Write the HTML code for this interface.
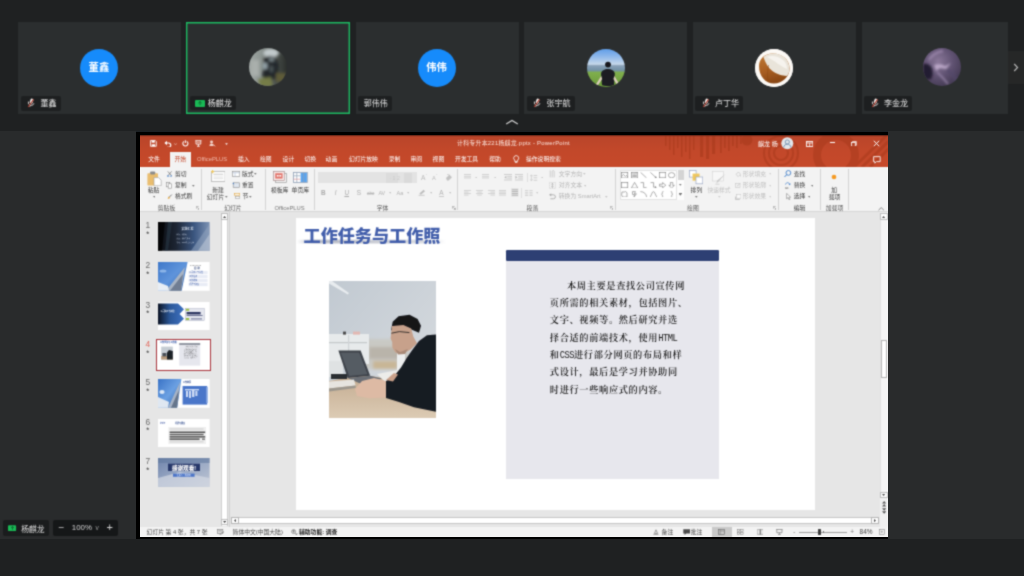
<!DOCTYPE html>
<html lang="zh-CN">
<head>
<meta charset="utf-8">
<title>会议 - 屏幕共享</title>
<style>
*{box-sizing:border-box;margin:0;padding:0}
html,body{width:1024px;height:576px;overflow:hidden;background:#1f2122}
body{position:relative;font-family:"Liberation Sans","Noto Sans CJK SC",sans-serif;color:#e6e6e6}
.abs{position:absolute}
/* ---------- participant strip ---------- */
.tile{position:absolute;top:22px;height:92px;width:163px;background:#2b2e2f}
.tile.active{outline:none;border:1.3px solid #1dbb63;box-shadow:inset 0 0 0 0.4px #1dbb63;background:#2b2e2f}
.av{position:absolute;left:50%;top:26.7px;width:38px;height:38px;margin-left:-19px;border-radius:50%;overflow:hidden}
.av.blue{background:#168bfb;color:#fff;font-weight:700;font-size:10.3px;line-height:38px;text-align:center;letter-spacing:0}
.nm{position:absolute;left:2.8px;top:73.9px;height:14.9px;background:#1d1f20;border-radius:2px;font-size:8px;line-height:14.9px;color:#e4e4e4;padding:0 4.2px 0 6.6px;white-space:nowrap;display:flex;align-items:center}
.nm svg{margin-right:5px;flex:none}
.nt{position:relative;top:1.2px}
/* ---------- share area ---------- */
#share{position:absolute;left:0;top:130.5px;width:1024px;height:408px;background:#292b2c}
#ppt{position:absolute;left:136px;top:132px;width:752px;height:407px;background:#000;overflow:hidden}
#win{position:absolute;left:4px;top:3px;width:748px;height:402px;background:#e6e6e6;overflow:hidden;font-size:5.8px;color:#3b3b3b}
#titlebar{position:absolute;left:0;top:0;width:748px;height:31.5px;background:linear-gradient(#b9452a,#c2482a 45%,#c6492a);color:#fff;border-top:1px solid #5c2215}
#ribbon{position:absolute;left:0;top:31.5px;width:748px;height:45.5px;background:#f3f3f3;border-bottom:1px solid #d6d6d6}
#thumbs{position:absolute;left:0;top:77px;width:81px;height:315px;background:#e6e6e6}
#status{position:absolute;left:0;top:391.5px;width:748px;height:10.5px;background:#f3f3f3;color:#444}
.ov{position:absolute;left:0;top:0;width:748px;height:402px}
#win{will-change:transform;filter:url(#soft)}
#strip{position:absolute;left:0;top:0;width:1024px;height:130px;will-change:transform;filter:url(#soft)}
#bl{position:absolute;left:0;top:0;width:130px;height:576px;will-change:transform;filter:url(#soft)}
.la{font-family:"Liberation Mono",monospace;font-weight:400;font-size:8.8px;letter-spacing:-0.5px;display:inline-block;transform:scaleY(1.2);transform-origin:50% 78%;line-height:1}
.t{position:absolute;white-space:nowrap;line-height:1}
</style>
</head>
<body>
<svg width="0" height="0" style="position:absolute"><defs><filter id="soft" x="0" y="0" width="100%" height="100%" color-interpolation-filters="sRGB"><feConvolveMatrix order="3" kernelMatrix="0.04 0.11 0.04 0.11 0.40 0.11 0.04 0.11 0.04" divisor="1" edgeMode="duplicate" preserveAlpha="false"/></filter></defs></svg>
<!-- PARTICIPANTS -->
<div id="strip">
<div class="tile" style="left:18px"><div class="av blue" style="margin-left:-19.6px">董鑫</div><div class="nm"><svg width="8" height="10" viewBox="0 0 8 10"><g transform="rotate(18 4 5)"><rect x="2.5" y="0.4" width="3" height="5.4" rx="1.5" fill="#f4efee"/><path d="M1.1 4.4a2.9 2.9 0 0 0 5.8 0M4 7.3v1.7" stroke="#e6dedc" stroke-width="0.85" fill="none"/></g><path d="M6.6 1.4L1.2 9" stroke="#a8392b" stroke-width="1.1"/></svg><span class="nt">董鑫</span></div></div>
<div class="tile active" style="left:186px;width:164.3px;height:92.3px"><div class="av" id="av2" style="top:25.3px;margin-left:-19.6px">
<svg width="38" height="38" viewBox="0 0 38 38"><defs><filter id="b2"><feGaussianBlur stdDeviation="1.4"/></filter><linearGradient id="g2" x1="0" y1="0" x2="1" y2="0"><stop offset="0" stop-color="#9fa6a3"/><stop offset="0.3" stop-color="#8d9592"/><stop offset="0.6" stop-color="#565c58"/><stop offset="1" stop-color="#2b2f2c"/></linearGradient></defs><rect width="38" height="38" fill="url(#g2)"/><g filter="url(#b2)"><ellipse cx="22" cy="5" rx="8" ry="4.5" fill="#c2cacc"/><path d="M15 10l5-2 6 1 4 7-1 14-10 3-6-5 2-9z" fill="#232829"/><rect x="14" y="15" width="4.4" height="6" fill="#93a2a8"/><rect x="20" y="10" width="5" height="3.4" fill="#7a878b"/><rect x="21" y="18" width="3" height="6" fill="#4c5558"/><path d="M9 31l13-2 2 10H11z" fill="#747b47"/><rect x="27" y="25" width="10" height="9" fill="#5e5c37"/><rect x="2" y="12" width="8" height="16" fill="#a9afac"/></g></svg></div>
<div class="nm" style="left:2.8px;top:72.6px;padding-left:4.8px"><svg style="margin-right:3.2px" width="10" height="7" viewBox="0 0 10 7"><rect x="0" y="0" width="10" height="7" rx="1" fill="#19b955"/><path d="M5 1.6v3.6M3.4 3L5 1.5 6.6 3" stroke="#0d5e2d" stroke-width="0.9" fill="none"/></svg><span class="nt">杨麒龙</span></div></div>
<div class="tile" style="left:355.5px"><div class="av blue" style="margin-left:-19.5px">伟伟</div><div class="nm" style="left:2.5px;padding-left:5.8px;padding-right:4.6px"><span class="nt">郭伟伟</span></div></div>
<div class="tile" style="left:524px"><div class="av" id="av4" style="margin-left:-19px">
<svg width="38" height="38" viewBox="0 0 38 38"><defs><linearGradient id="sky" x1="0" y1="0" x2="0" y2="1"><stop offset="0" stop-color="#609ee9"/><stop offset="0.2" stop-color="#8fb8ea"/><stop offset="0.4" stop-color="#c6d8ea"/><stop offset="0.44" stop-color="#8aa1b8"/><stop offset="0.56" stop-color="#7291a6"/><stop offset="0.62" stop-color="#7fae4c"/><stop offset="1" stop-color="#6b9a3a"/></linearGradient><filter id="b4"><feGaussianBlur stdDeviation="0.7"/></filter></defs><rect width="38" height="38" fill="url(#sky)"/><g filter="url(#b4)"><circle cx="21" cy="15.6" r="2.9" fill="#14171a"/><path d="M14 24.6c0.6-3 3.4-4.6 7-4.6s6.2 1.6 6.8 4.6l-0.8 11.4c-2 1.4-10 1.4-12 0z" fill="#1a1e21"/><path d="M14.2 27l-5.4 8.6 2 1 4.4-6.6zM27.4 27l5 8.2-2 1-4-6.2z" fill="#d9ccb9"/></g></svg></div>
<div class="nm"><svg width="8" height="10" viewBox="0 0 8 10"><g transform="rotate(18 4 5)"><rect x="2.5" y="0.4" width="3" height="5.4" rx="1.5" fill="#f4efee"/><path d="M1.1 4.4a2.9 2.9 0 0 0 5.8 0M4 7.3v1.7" stroke="#e6dedc" stroke-width="0.85" fill="none"/></g><path d="M6.6 1.4L1.2 9" stroke="#a8392b" stroke-width="1.1"/></svg><span class="nt">张宇航</span></div></div>
<div class="tile" style="left:692.7px"><div class="av" id="av5" style="background:#fff;margin-left:-19.4px;top:26.8px">
<svg width="38" height="38" viewBox="0 0 38 38"><defs><filter id="b5"><feGaussianBlur stdDeviation="0.6"/></filter><linearGradient id="co" x1="0" y1="0" x2="0.3" y2="1"><stop offset="0" stop-color="#c07a36"/><stop offset="0.6" stop-color="#a85e22"/><stop offset="1" stop-color="#8a4816"/></linearGradient></defs><circle cx="19" cy="19" r="19" fill="#fcf9f5"/><g filter="url(#b5)"><path d="M4 17c0-7 6-12.6 14-12.4 9 0.2 16.6 6 16.6 15 0 8-7 15-15.600000000000001 15C10.4 34.6 4 27 4 17z" fill="url(#co)"/><path d="M8.400000000000002 8c4-4 12-4.6 18-1.6 6 3 8.6 9 8 15-0.4 3-2 5-3 5.600000000000001-4-0.4-9-1.4-14-5-4-3-7-8-9-14z" fill="#e9e4da"/><path d="M12 8c5-2 11-1 16 3 3 2.600000000000001 4 6 4 9-5-2-9-5-12-7.4-3-2-6-3.6-8-4.6z" fill="#f6f3ee"/><path d="M13.6 16c-1 6-2 12 0 17" stroke="#8a4816" stroke-width="0.8" fill="none" opacity="0.6"/></g></svg></div>
<div class="nm"><svg width="8" height="10" viewBox="0 0 8 10"><g transform="rotate(18 4 5)"><rect x="2.5" y="0.4" width="3" height="5.4" rx="1.5" fill="#f4efee"/><path d="M1.1 4.4a2.9 2.9 0 0 0 5.8 0M4 7.3v1.7" stroke="#e6dedc" stroke-width="0.85" fill="none"/></g><path d="M6.6 1.4L1.2 9" stroke="#a8392b" stroke-width="1.1"/></svg><span class="nt">卢丁华</span></div></div>
<div class="tile" style="left:861.5px;width:146.5px"><div class="av" id="av6" style="left:80.5px;margin-left:-19px;top:26.3px">
<svg width="38" height="38" viewBox="0 0 38 38"><defs><radialGradient id="pg" cx="0.4" cy="0.35" r="0.75"><stop offset="0" stop-color="#8a7899"/><stop offset="0.5" stop-color="#615373"/><stop offset="1" stop-color="#3f364e"/></radialGradient><filter id="b6"><feGaussianBlur stdDeviation="1.2"/></filter></defs><rect width="38" height="38" fill="url(#pg)"/><g filter="url(#b6)"><path d="M0 16c4-1 8 1 9 5s1 7-1 10l-8 1z" fill="#231e30"/><path d="M11 17c4-2 8-1 11 1l6-3-5 6-6-1-4 3z" fill="#b9a6c6"/><path d="M14 24l6 6 5 6" stroke="#9f8cb1" stroke-width="1.4" fill="none"/><path d="M6 12c3-5 8-8 14-9" stroke="#a792b6" stroke-width="2.4" fill="none" opacity="0.7"/><path d="M24 22c4 2 8 6 10 12" stroke="#54476a" stroke-width="4" fill="none" opacity="0.6"/></g></svg></div>
<div class="nm"><svg width="8" height="10" viewBox="0 0 8 10"><g transform="rotate(18 4 5)"><rect x="2.5" y="0.4" width="3" height="5.4" rx="1.5" fill="#f4efee"/><path d="M1.1 4.4a2.9 2.9 0 0 0 5.8 0M4 7.3v1.7" stroke="#e6dedc" stroke-width="0.85" fill="none"/></g><path d="M6.6 1.4L1.2 9" stroke="#a8392b" stroke-width="1.1"/></svg><span class="nt">李金龙</span></div></div>
<div class="abs" style="left:1008px;top:51px;width:16px;height:33px;background:#262727"><svg class="abs" style="left:5px;top:12px" width="6" height="9" viewBox="0 0 6 9"><path d="M1.2 1l3.4 3.5L1.2 8" stroke="#b9b9b9" stroke-width="1.1" fill="none"/></svg></div>
<svg class="abs" style="left:504.5px;top:118.5px" width="14" height="6" viewBox="0 0 14 6"><path d="M1.2 5L7 1.4 12.8 5" stroke="#d0d0d0" stroke-width="1.2" fill="none"/></svg>
</div>
<!-- SHARE -->
<div id="share"></div>
<div class="abs" style="left:136px;top:130.5px;width:752px;height:2px;background:#1c2125"></div>
<div id="ppt"><div id="win">
<div id="titlebar"></div>
<div class="ov" id="titlebar-c">
<svg class="abs" style="left:500px;top:0.5px;" width="248" height="31" viewBox="0 0 248 31"><g fill="#a93a1c" opacity="0.6"><rect x="25" y="0" width="1.5" height="10"/><rect x="29" y="0" width="1.5" height="14"/><rect x="33" y="0" width="1.5" height="19"/><rect x="37" y="0" width="1.5" height="12"/><rect x="41" y="0" width="1.5" height="21"/><rect x="45" y="0" width="1.5" height="16"/><rect x="49" y="0" width="1.5" height="23"/><rect x="53" y="0" width="1.5" height="14"/><rect x="60" y="0" width="3.2" height="21"/><rect x="66" y="0" width="3.2" height="23"/><rect x="72" y="0" width="3.2" height="18"/><rect x="80" y="0" width="1.7" height="17"/><rect x="84" y="0" width="1.7" height="12"/><rect x="88" y="0" width="1.7" height="15"/><rect x="92" y="0" width="1.7" height="10"/><rect x="96" y="0" width="1.7" height="12"/><rect x="100" y="0" width="1.7" height="8"/><circle cx="107" cy="4" r="5.5"/></g><g fill="none" stroke="#a93a1c" opacity="0.55"><circle cx="141" cy="17" r="7" stroke-width="2.2"/><circle cx="141" cy="17" r="12" stroke-width="2.2"/><circle cx="141" cy="17" r="17" stroke-width="2.2"/><circle cx="196" cy="19" r="19" stroke-width="8"/><path d="M214 31L246 0M222 31L254 0M230 31L262 0" stroke-width="3"/></g></svg>
<svg class="abs" style="left:10px;top:5.3px;" width="6.8" height="6.8" viewBox="0 0 8 8"><path d="M0.6 0.6h5.6l1.2 1.2v5.6H0.6z" fill="none" stroke="#fff" stroke-width="1"/><rect x="2" y="0.8" width="3.6" height="2.4" fill="#fff"/><rect x="2" y="5" width="4" height="2.4" fill="#fff"/></svg>
<svg class="abs" style="left:24px;top:5.2px;" width="8" height="7.1" viewBox="0 0 9 8"><path d="M1 3.4h4.2a2.4 2.4 0 0 1 0 4.8H3.6" fill="none" stroke="#fff" stroke-width="1.3"/><path d="M3.4 0.8L0.6 3.4l2.8 2.6z" fill="#fff"/></svg>
<svg class="abs" style="left:33.8px;top:7.6px;" width="3" height="2.4" viewBox="0 0 3 2.4"><path d="M0.2 0.3L1.5 1.9 2.8 0.3" fill="none" stroke="#f0c9bd" stroke-width="0.6"/></svg>
<svg class="abs" style="left:42.4px;top:5.3px;" width="6.8" height="6.8" viewBox="0 0 8 8"><path d="M5.6 1.6a3 3 0 1 1-3.2 0" fill="none" stroke="#fff" stroke-width="1.3"/><path d="M4 0.2v3.4" stroke="#fff" stroke-width="1.2"/></svg>
<svg class="abs" style="left:55.2px;top:5.4px;" width="6.8" height="6.8" viewBox="0 0 8 8"><path d="M0.4 0.8h7.2M1.2 0.8v4h5.6v-4M4 4.8v2.6M2.4 7.4h3.2" fill="none" stroke="#fff" stroke-width="1"/><path d="M2.4 2.6h3.2" stroke="#fff" stroke-width="0.8"/></svg>
<svg class="abs" style="left:69.2px;top:5.4px;" width="6.8" height="6.8" viewBox="0 0 8 8"><circle cx="3" cy="2.4" r="1.7" fill="#f3d5cc"/><path d="M0.6 7c0-2 1.2-2.8 2.4-2.8S5.4 5 5.4 7z" fill="#f3d5cc"/><path d="M5 5.4l2.4 2" stroke="#f3d5cc" stroke-width="0.9"/></svg>
<svg class="abs" style="left:85.4px;top:8.2px;" width="3" height="2.4" viewBox="0 0 3 2.4"><path d="M0.2 0.2h2.6L1.5 2z" fill="#fff"/></svg>
<span class="t" style="top:6.28px;font-size:5.9px;left:317px;color:#fbe3da;letter-spacing:0.27px;">计科专升本221杨麒龙.pptx  -  PowerPoint</span>
<span class="t" style="top:6.04px;font-size:6px;left:618px;color:#fff;">麒龙 杨</span>
<svg class="abs" style="left:641px;top:2.3px;" width="12.6" height="12.6" viewBox="0 0 12.6 12.6"><circle cx="6.3" cy="6.3" r="6" fill="#e2e6ea"/><circle cx="6.3" cy="5" r="2.1" fill="none" stroke="#7391b0" stroke-width="0.9"/><path d="M2.6 10.6c0.4-2.4 1.8-3.4 3.7-3.4s3.3 1 3.7 3.4" fill="none" stroke="#7391b0" stroke-width="0.9"/></svg>
<svg class="abs" style="left:666px;top:5.6px;" width="7.4" height="6" viewBox="0 0 7.4 6"><rect x="0.5" y="0.5" width="6.4" height="5" fill="none" stroke="#fff" stroke-width="0.9"/><path d="M0.5 2h6.4M3.7 2v3.5" stroke="#fff" stroke-width="0.8"/></svg>
<div class="abs" style="left:690px;top:7.2px;width:5.4px;height:0.9px;background:#fff;"></div>
<svg class="abs" style="left:711.2px;top:5.6px;" width="5.8" height="5.8" viewBox="0 0 7 7"><rect x="0.6" y="1.8" width="4.6" height="4.6" fill="none" stroke="#fff" stroke-width="1"/><path d="M1.8 1.8V0.6h4.6v4.6H5.2" fill="none" stroke="#fff" stroke-width="0.9"/></svg>
<svg class="abs" style="left:733.4px;top:5.2px;" width="7" height="7" viewBox="0 0 7 7"><path d="M0.8 0.8l5.4 5.4M6.2 0.8L0.8 6.2" stroke="#fff" stroke-width="0.95"/></svg>
<svg class="abs" style="left:732.6px;top:20.6px;" width="8" height="8" viewBox="0 0 8 8"><path d="M0.6 0.6h6.6v5H3.4L1.8 7.2V5.6H0.6z" fill="none" stroke="#fff" stroke-width="0.85"/></svg>
<div class="abs" style="left:29.6px;top:16.8px;width:21.4px;height:14.8px;background:#f3f3f3;"></div>
<span class="t" style="top:22.22px;font-size:5.8px;left:14px;transform:translateX(-50%);color:#fff;">文件</span>
<span class="t" style="top:22.22px;font-size:5.8px;left:40.3px;transform:translateX(-50%);color:#c4472a;">开始</span>
<span class="t" style="top:22.22px;font-size:5.8px;left:72px;transform:translateX(-50%);color:#efb8a9;">OfficePLUS</span>
<span class="t" style="top:22.22px;font-size:5.8px;left:103.7px;transform:translateX(-50%);color:#fff;">插入</span>
<span class="t" style="top:22.22px;font-size:5.8px;left:125.8px;transform:translateX(-50%);color:#fff;">绘图</span>
<span class="t" style="top:22.22px;font-size:5.8px;left:148.4px;transform:translateX(-50%);color:#fff;">设计</span>
<span class="t" style="top:22.22px;font-size:5.8px;left:170.3px;transform:translateX(-50%);color:#fff;">切换</span>
<span class="t" style="top:22.22px;font-size:5.8px;left:191.4px;transform:translateX(-50%);color:#fff;">动画</span>
<span class="t" style="top:22.22px;font-size:5.8px;left:223.4px;transform:translateX(-50%);color:#fff;">幻灯片放映</span>
<span class="t" style="top:22.22px;font-size:5.8px;left:254.5px;transform:translateX(-50%);color:#fff;">录制</span>
<span class="t" style="top:22.22px;font-size:5.8px;left:276.3px;transform:translateX(-50%);color:#fff;">审阅</span>
<span class="t" style="top:22.22px;font-size:5.8px;left:298.4px;transform:translateX(-50%);color:#fff;">视图</span>
<span class="t" style="top:22.22px;font-size:5.8px;left:326.5px;transform:translateX(-50%);color:#fff;">开发工具</span>
<span class="t" style="top:22.22px;font-size:5.8px;left:355px;transform:translateX(-50%);color:#fff;">帮助</span>
<svg class="abs" style="left:373.4px;top:20.4px;" width="6.4" height="8.4" viewBox="0 0 6.4 8.4"><path d="M3.2 0.6a2.5 2.5 0 0 1 1.5 4.5v1.3H1.7V5.1A2.5 2.5 0 0 1 3.2 0.6zM2 7.4h2.4" fill="none" stroke="#fff" stroke-width="0.8"/></svg>
<span class="t" style="top:22.22px;font-size:5.8px;left:386px;color:#fff;">操作说明搜索</span>
</div>
<div id="ribbon"></div>
<div class="ov" id="ribbon-c">
<svg class="abs" style="left:7.4px;top:35.6px;" width="14.6" height="15.2" viewBox="0 0 14.6 15.2"><rect x="0.4" y="2.2" width="10.6" height="12.4" rx="0.8" fill="#e9bd6f"/><rect x="3.2" y="0.4" width="5" height="3.2" rx="0.8" fill="#8b8b8b"/><path d="M7 6.6h4.6l2.6 2.6v5.6H7z" fill="#fff" stroke="#9a9a9a" stroke-width="0.6"/></svg>
<span class="t" style="top:52.52px;font-size:5.8px;left:13.6px;transform:translateX(-50%);color:#3c3c3c;">粘贴</span>
<svg class="abs" style="left:12.5px;top:61px;" width="2.6" height="1.8" viewBox="0 0 2.6 1.8"><path d="M0 0h2.6L1.3 1.7z" fill="#777"/></svg>
<svg class="abs" style="left:26.6px;top:35.8px;" width="5.4" height="6.2" viewBox="0 0 5.4 6.2"><path d="M0.8 0.4l3.4 4M4.6 0.4L1.2 4.4" stroke="#6b6b6b" stroke-width="0.7"/><circle cx="1" cy="5.2" r="0.8" fill="none" stroke="#3d78c2" stroke-width="0.6"/><circle cx="4.4" cy="5.2" r="0.8" fill="none" stroke="#3d78c2" stroke-width="0.6"/></svg>
<span class="t" style="top:36.52px;font-size:5.8px;left:35px;color:#3c3c3c;">剪切</span>
<svg class="abs" style="left:26.4px;top:47.2px;" width="6" height="6.6" viewBox="0 0 6 6.6"><rect x="0.4" y="0.4" width="3.4" height="4.4" fill="#fff" stroke="#8a8a8a" stroke-width="0.6"/><rect x="2.2" y="1.8" width="3.4" height="4.4" fill="#fff" stroke="#8a8a8a" stroke-width="0.6"/></svg>
<span class="t" style="top:48.12px;font-size:5.8px;left:35px;color:#3c3c3c;">复制</span>
<svg class="abs" style="left:52px;top:49.9px;" width="2.6" height="1.8" viewBox="0 0 2.6 1.8"><path d="M0 0h2.6L1.3 1.7z" fill="#777"/></svg>
<svg class="abs" style="left:27px;top:58.6px;" width="5.6" height="5.6" viewBox="0 0 5.6 5.6"><path d="M4.8 0.6L2.4 3" stroke="#6b6b6b" stroke-width="0.9"/><path d="M0.6 5l1-2.6 1.8 1.6z" fill="#e0a43c"/></svg>
<span class="t" style="top:59.12px;font-size:5.8px;left:35px;color:#3c3c3c;">格式刷</span>
<span class="t" style="top:70.52px;font-size:5.8px;left:26.5px;transform:translateX(-50%);color:#555;">剪贴板</span>
<svg class="abs" style="left:55.6px;top:71.3px;" width="3.8" height="3.8" viewBox="0 0 3.8 3.8"><path d="M0.3 0.3h2.4M0.3 0.3v2.4M1.4 1.4l2 2M3.4 1.8v1.6H1.8" fill="none" stroke="#8a8a8a" stroke-width="0.6"/></svg>
<div class="abs" style="left:61.25px;top:33.5px;width:0.7px;height:41.8px;background:#d2d2d2;"></div>
<svg class="abs" style="left:70.8px;top:35.2px;" width="14.6" height="12" viewBox="0 0 14.6 12"><rect x="0.5" y="1.6" width="13.6" height="9.8" fill="#fff" stroke="#a9a9a9" stroke-width="0.7"/><rect x="2.4" y="3.6" width="9.8" height="1.6" fill="#d9d9d9"/><rect x="2.4" y="6.6" width="9.8" height="0.8" fill="#d9d9d9"/><rect x="2.4" y="8.4" width="9.8" height="0.8" fill="#d9d9d9"/><path d="M1.6 0v3.2M0 1.6h3.2" stroke="#efc75e" stroke-width="1.1"/></svg>
<span class="t" style="top:52.82px;font-size:5.8px;left:78px;transform:translateX(-50%);color:#3c3c3c;">新建</span>
<span class="t" style="top:59.52px;font-size:5.8px;left:66.8px;color:#3c3c3c;">幻灯片</span>
<svg class="abs" style="left:85.3px;top:61.3px;" width="2.6" height="1.8" viewBox="0 0 2.6 1.8"><path d="M0 0h2.6L1.3 1.7z" fill="#777"/></svg>
<svg class="abs" style="left:92px;top:35.8px;" width="8.2" height="6" viewBox="0 0 8.2 6"><rect x="0.4" y="0.4" width="7.4" height="5.2" fill="#fff" stroke="#8a8a8a" stroke-width="0.6"/><path d="M0.4 1.8h7.4M3 1.8v3.8" stroke="#a7b9d3" stroke-width="0.6"/></svg>
<span class="t" style="top:36.52px;font-size:5.8px;left:102px;color:#3c3c3c;">版式</span>
<svg class="abs" style="left:114.1px;top:38.3px;" width="2.6" height="1.8" viewBox="0 0 2.6 1.8"><path d="M0 0h2.6L1.3 1.7z" fill="#777"/></svg>
<svg class="abs" style="left:92px;top:47.4px;" width="8.2" height="6" viewBox="0 0 8.2 6"><rect x="1.2" y="0.8" width="6.4" height="4.6" fill="#dfe6ef" stroke="#8a8a8a" stroke-width="0.6"/><path d="M0.4 1.4l1.6-1v2z" fill="#4a7ebf"/></svg>
<span class="t" style="top:48.12px;font-size:5.8px;left:102px;color:#3c3c3c;">重置</span>
<svg class="abs" style="left:93.6px;top:58.4px;" width="6.4" height="6.2" viewBox="0 0 6.4 6.2"><rect x="0.4" y="0.4" width="5.4" height="1.8" fill="#fff" stroke="#e0a43c" stroke-width="0.6"/><rect x="1.6" y="3.6" width="4.2" height="1.8" fill="#fff" stroke="#a0a0a0" stroke-width="0.6"/></svg>
<span class="t" style="top:59.12px;font-size:5.8px;left:102.4px;color:#3c3c3c;">节</span>
<svg class="abs" style="left:109.3px;top:60.9px;" width="2.6" height="1.8" viewBox="0 0 2.6 1.8"><path d="M0 0h2.6L1.3 1.7z" fill="#777"/></svg>
<span class="t" style="top:70.52px;font-size:5.8px;left:92.9px;transform:translateX(-50%);color:#555;">幻灯片</span>
<div class="abs" style="left:125.45px;top:33.5px;width:0.7px;height:41.8px;background:#d2d2d2;"></div>
<svg class="abs" style="left:133.2px;top:36.2px;" width="14" height="12.2" viewBox="0 0 14 12.2"><rect x="2.6" y="2.6" width="10.8" height="9" fill="#f7f7f7" stroke="#9c9c9c" stroke-width="0.7"/><rect x="0.5" y="0.5" width="10.8" height="9" fill="#fbeceb" stroke="#a78b8b" stroke-width="0.7"/><rect x="2.2" y="2.2" width="7.4" height="5.4" fill="#e0746b"/><rect x="3.8" y="4" width="1.8" height="1.6" fill="#fff"/><rect x="6.4" y="4" width="1.8" height="1.6" fill="#fff"/></svg>
<svg class="abs" style="left:152.8px;top:36.8px;" width="14.8" height="11" viewBox="0 0 14.8 11"><rect x="0.5" y="0.5" width="13.8" height="10" fill="#fff" stroke="#8e9fb5" stroke-width="0.8"/><rect x="7.6" y="0.9" width="6.3" height="9.2" fill="#5aa3ec"/><path d="M0.5 3.8h7M3.8 0.5v10M10.6 0.9v9.2" stroke="#8e9fb5" stroke-width="0.7"/><path d="M0.5 7.2h7" stroke="#d88" stroke-width="0.6"/></svg>
<span class="t" style="top:52.52px;font-size:5.8px;left:139.6px;transform:translateX(-50%);color:#3c3c3c;">模板库</span>
<span class="t" style="top:52.52px;font-size:5.8px;left:160.3px;transform:translateX(-50%);color:#3c3c3c;">单页库</span>
<span class="t" style="top:70.52px;font-size:5.8px;left:149.5px;transform:translateX(-50%);color:#777;">OfficePLUS</span>
<div class="abs" style="left:173.95px;top:33.5px;width:0.7px;height:41.8px;background:#d2d2d2;"></div>
<div class="abs" style="left:178px;top:37.4px;width:99px;height:10.8px;background:#e3e3e3;"></div>
<div class="abs" style="left:245.6px;top:38px;width:12.8px;height:9.6px;background:#dcdcdc;"></div>
<div class="abs" style="left:264px;top:38px;width:7.6px;height:9.6px;background:#dadada;"></div>
<span class="t" style="top:40.67px;font-size:5.2px;left:249.4px;color:#c9c9c9;">· 1 2</span>
<span class="t" style="top:55.28px;font-size:6.4px;left:183.3px;transform:translateX(-50%);color:#ababab;font-weight:700;">B</span>
<span class="t" style="top:55.28px;font-size:6.4px;left:195.6px;transform:translateX(-50%);color:#ababab;font-style:italic;">I</span>
<span class="t" style="top:55.28px;font-size:6.4px;left:206.7px;transform:translateX(-50%);color:#ababab;text-decoration:underline;">U</span>
<span class="t" style="top:55.28px;font-size:6.4px;left:218.9px;transform:translateX(-50%);color:#ababab;">S</span>
<span class="t" style="top:56.51px;font-size:4.6px;left:230.6px;transform:translateX(-50%);color:#b8b8b8;text-decoration:line-through;">abc</span>
<span class="t" style="top:55.69px;font-size:5.4px;left:241.8px;transform:translateX(-50%);color:#b4b4b4;">AV</span>
<svg class="abs" style="left:248.7px;top:57.4px;" width="2.6" height="1.8" viewBox="0 0 2.6 1.8"><path d="M0 0h2.6L1.3 1.7z" fill="#c4c4c4"/></svg>
<span class="t" style="top:55.6px;font-size:5.6px;left:260px;transform:translateX(-50%);color:#b4b4b4;">Aa</span>
<svg class="abs" style="left:266.9px;top:57.4px;" width="2.6" height="1.8" viewBox="0 0 2.6 1.8"><path d="M0 0h2.6L1.3 1.7z" fill="#c4c4c4"/></svg>
<svg class="abs" style="left:277.6px;top:54.2px;" width="8" height="7" viewBox="0 0 8 7"><path d="M1.4 4.6L5.6 0.8l1.4 1.4-4.2 3.6z" fill="#bcbcbc"/><rect x="0.6" y="5.8" width="6" height="1" fill="#c9c9c9"/></svg>
<svg class="abs" style="left:289.7px;top:57.4px;" width="2.6" height="1.8" viewBox="0 0 2.6 1.8"><path d="M0 0h2.6L1.3 1.7z" fill="#c4c4c4"/></svg>
<span class="t" style="top:54.98px;font-size:6.4px;left:301.4px;transform:translateX(-50%);color:#b0b0b0;">A</span>
<div class="abs" style="left:298.6px;top:60.6px;width:5.6px;height:0.9px;background:#c9c9c9;"></div>
<svg class="abs" style="left:308.7px;top:57.4px;" width="2.6" height="1.8" viewBox="0 0 2.6 1.8"><path d="M0 0h2.6L1.3 1.7z" fill="#c4c4c4"/></svg>
<span class="t" style="top:39.89px;font-size:6.6px;left:283.3px;transform:translateX(-50%);color:#b9b9b9;">A</span>
<span class="t" style="top:38.96px;font-size:4px;left:286.4px;transform:translateX(-50%);color:#b9b9b9;">ˆ</span>
<span class="t" style="top:40.6px;font-size:5.6px;left:293.8px;transform:translateX(-50%);color:#b9b9b9;">A</span>
<span class="t" style="top:39.36px;font-size:4px;left:296.6px;transform:translateX(-50%);color:#b9b9b9;">ˇ</span>
<svg class="abs" style="left:305.2px;top:39px;" width="8" height="7" viewBox="0 0 8 7"><path d="M1 4l3.4-3.2 2.6 2.4L3.6 6.4H2z" fill="#c2c2c2"/><path d="M4.6 1L2 0.2" stroke="#c2c2c2" stroke-width="0.7"/></svg>
<span class="t" style="top:70.52px;font-size:5.8px;left:242.6px;transform:translateX(-50%);color:#555;">字体</span>
<svg class="abs" style="left:312px;top:71.3px;" width="3.8" height="3.8" viewBox="0 0 3.8 3.8"><path d="M0.3 0.3h2.4M0.3 0.3v2.4M1.4 1.4l2 2M3.4 1.8v1.6H1.8" fill="none" stroke="#8a8a8a" stroke-width="0.6"/></svg>
<div class="abs" style="left:317.35px;top:33.5px;width:0.7px;height:41.8px;background:#d2d2d2;"></div>
<svg class="abs" style="left:323.6px;top:39.2px;" width="8" height="8" viewBox="0 0 8 8"><rect x="0" y="0.2" width="7" height="0.75" fill="#c6c6c6"/><rect x="0" y="1.9" width="7" height="0.75" fill="#c6c6c6"/><rect x="0" y="3.6" width="7" height="0.75" fill="#c6c6c6"/></svg>
<svg class="abs" style="left:334.5px;top:41.7px;" width="2.6" height="1.8" viewBox="0 0 2.6 1.8"><path d="M0 0h2.6L1.3 1.7z" fill="#cacaca"/></svg>
<svg class="abs" style="left:342.4px;top:39.2px;" width="8" height="8" viewBox="0 0 8 8"><rect x="0" y="0.2" width="7" height="0.75" fill="#c6c6c6"/><rect x="0" y="1.9" width="7" height="0.75" fill="#c6c6c6"/><rect x="0" y="3.6" width="7" height="0.75" fill="#c6c6c6"/></svg>
<svg class="abs" style="left:353.7px;top:41.7px;" width="2.6" height="1.8" viewBox="0 0 2.6 1.8"><path d="M0 0h2.6L1.3 1.7z" fill="#cacaca"/></svg>
<svg class="abs" style="left:363.6px;top:39px;" width="8.4" height="6.6" viewBox="0 0 8.4 6.6"><rect x="0" y="0" width="8" height="0.8" fill="#c4c4c4"/><rect x="3.2" y="1.9" width="4.8" height="0.8" fill="#c4c4c4"/><rect x="3.2" y="3.7" width="4.8" height="0.8" fill="#c4c4c4"/><rect x="0" y="5.6" width="8" height="0.8" fill="#c4c4c4"/><path d="M2.4 1.8v3L0.4 3.3z" fill="#b6b6b6"/></svg>
<svg class="abs" style="left:375.4px;top:39px;" width="8.4" height="6.6" viewBox="0 0 8.4 6.6"><rect x="0" y="0" width="8" height="0.8" fill="#c4c4c4"/><rect x="3.2" y="1.9" width="4.8" height="0.8" fill="#c4c4c4"/><rect x="3.2" y="3.7" width="4.8" height="0.8" fill="#c4c4c4"/><rect x="0" y="5.6" width="8" height="0.8" fill="#c4c4c4"/><path d="M0.4 1.8v3l2-1.5z" fill="#b6b6b6"/></svg>
<div class="abs" style="left:386.6px;top:37.6px;width:0.6px;height:9.8px;background:#dedede;"></div>
<svg class="abs" style="left:390.4px;top:38.6px;" width="7.4" height="7.6" viewBox="0 0 7.4 7.6"><path d="M1.4 1.2v5.2M0.2 2.2l1.2-1.4 1.2 1.4M0.2 5.4l1.2 1.4 1.2-1.4" fill="none" stroke="#bdbdbd" stroke-width="0.6"/><rect x="3.6" y="1" width="3.6" height="0.8" fill="#c6c6c6"/><rect x="3.6" y="3.4" width="3.6" height="0.8" fill="#c6c6c6"/><rect x="3.6" y="5.8" width="3.6" height="0.8" fill="#c6c6c6"/></svg>
<svg class="abs" style="left:400.7px;top:41.7px;" width="2.6" height="1.8" viewBox="0 0 2.6 1.8"><path d="M0 0h2.6L1.3 1.7z" fill="#cacaca"/></svg>
<svg class="abs" style="left:324.2px;top:55px;" width="8" height="7" viewBox="0 0 8 7"><rect x="0" y="0.2" width="7" height="0.7" fill="#c4c4c4"/><rect x="0" y="1.7" width="4.6" height="0.7" fill="#c4c4c4"/><rect x="0" y="3.2" width="7" height="0.7" fill="#c4c4c4"/><rect x="0" y="4.7" width="4.6" height="0.7" fill="#c4c4c4"/></svg>
<svg class="abs" style="left:335.9px;top:55px;" width="8" height="7" viewBox="0 0 8 7"><rect x="0" y="0.2" width="7" height="0.7" fill="#c4c4c4"/><rect x="1.2" y="1.7" width="4.6" height="0.7" fill="#c4c4c4"/><rect x="0" y="3.2" width="7" height="0.7" fill="#c4c4c4"/><rect x="1.2" y="4.7" width="4.6" height="0.7" fill="#c4c4c4"/></svg>
<svg class="abs" style="left:347.6px;top:55px;" width="8" height="7" viewBox="0 0 8 7"><rect x="0" y="0.2" width="7" height="0.7" fill="#c4c4c4"/><rect x="2.4" y="1.7" width="4.6" height="0.7" fill="#c4c4c4"/><rect x="0" y="3.2" width="7" height="0.7" fill="#c4c4c4"/><rect x="2.4" y="4.7" width="4.6" height="0.7" fill="#c4c4c4"/></svg>
<svg class="abs" style="left:358.6px;top:55px;" width="8" height="7" viewBox="0 0 8 7"><rect x="0" y="0.2" width="7" height="0.7" fill="#c4c4c4"/><rect x="0" y="1.7" width="7" height="0.7" fill="#c4c4c4"/><rect x="0" y="3.2" width="7" height="0.7" fill="#c4c4c4"/><rect x="0" y="4.7" width="7" height="0.7" fill="#c4c4c4"/></svg>
<svg class="abs" style="left:370.6px;top:53.4px;" width="8" height="9" viewBox="0 0 8 9"><rect x="0.2" y="0.2" width="7.4" height="8.4" fill="#e4e4e4"/><rect x="0.8" y="1.4" width="6.2" height="0.8" fill="#aaa"/><rect x="0.8" y="3.2" width="6.2" height="0.8" fill="#aaa"/><rect x="0.8" y="5" width="6.2" height="0.8" fill="#aaa"/><rect x="0.8" y="6.8" width="6.2" height="0.8" fill="#aaa"/></svg>
<div class="abs" style="left:381.4px;top:53.4px;width:0.6px;height:9.2px;background:#dedede;"></div>
<svg class="abs" style="left:384.8px;top:55px;" width="8" height="6.4" viewBox="0 0 8 6.4"><rect x="0" y="0.2" width="3.2" height="0.7" fill="#c6c6c6"/><rect x="0" y="1.9" width="3.2" height="0.7" fill="#c6c6c6"/><rect x="0" y="3.6" width="3.2" height="0.7" fill="#c6c6c6"/><rect x="0" y="5.3" width="3.2" height="0.7" fill="#c6c6c6"/><rect x="4.4" y="0.2" width="3.2" height="0.7" fill="#c6c6c6"/><rect x="4.4" y="1.9" width="3.2" height="0.7" fill="#c6c6c6"/><rect x="4.4" y="3.6" width="3.2" height="0.7" fill="#c6c6c6"/><rect x="4.4" y="5.3" width="3.2" height="0.7" fill="#c6c6c6"/></svg>
<svg class="abs" style="left:395.5px;top:57.4px;" width="2.6" height="1.8" viewBox="0 0 2.6 1.8"><path d="M0 0h2.6L1.3 1.7z" fill="#cacaca"/></svg>
<svg class="abs" style="left:409.4px;top:34.8px;" width="6.6" height="8" viewBox="0 0 6.6 8"><path d="M1.2 0.4v7M3.2 1.6v5.8M5.2 1.6v5.8M3.2 1.6c0-1.4 2-1.4 2 0" fill="none" stroke="#bdbdbd" stroke-width="0.7"/></svg>
<span class="t" style="top:36.52px;font-size:5.8px;left:418.8px;color:#b4b4b4;">文字方向</span>
<svg class="abs" style="left:443.3px;top:38.3px;" width="2.6" height="1.8" viewBox="0 0 2.6 1.8"><path d="M0 0h2.6L1.3 1.7z" fill="#c4c4c4"/></svg>
<svg class="abs" style="left:408.8px;top:47px;" width="7" height="7" viewBox="0 0 7 7"><rect x="0.4" y="0.4" width="6" height="6" fill="none" stroke="#c0c0c0" stroke-width="0.6" stroke-dasharray="1.2 0.8"/><path d="M3.4 1.4v4M2.4 2.4l1-1 1 1M2.4 4.4l1 1 1-1" fill="none" stroke="#9d9d9d" stroke-width="0.6"/></svg>
<span class="t" style="top:48.12px;font-size:5.8px;left:418.8px;color:#b4b4b4;">对齐文本</span>
<svg class="abs" style="left:443.7px;top:49.9px;" width="2.6" height="1.8" viewBox="0 0 2.6 1.8"><path d="M0 0h2.6L1.3 1.7z" fill="#c4c4c4"/></svg>
<svg class="abs" style="left:409.4px;top:58.4px;" width="7" height="6.4" viewBox="0 0 7 6.4"><path d="M0.6 1.8h3.8a2 2 0 0 1 0 4H1.4" fill="none" stroke="#aaa" stroke-width="0.9"/><path d="M2.2 0.2L0.4 1.8l1.8 1.6z" fill="#aaa"/></svg>
<span class="t" style="top:59.12px;font-size:5.8px;left:418.8px;color:#b4b4b4;">转换为 SmartArt</span>
<svg class="abs" style="left:465.3px;top:60.9px;" width="2.6" height="1.8" viewBox="0 0 2.6 1.8"><path d="M0 0h2.6L1.3 1.7z" fill="#c4c4c4"/></svg>
<span class="t" style="top:70.52px;font-size:5.8px;left:392.4px;transform:translateX(-50%);color:#555;">段落</span>
<svg class="abs" style="left:469.6px;top:71.3px;" width="3.8" height="3.8" viewBox="0 0 3.8 3.8"><path d="M0.3 0.3h2.4M0.3 0.3v2.4M1.4 1.4l2 2M3.4 1.8v1.6H1.8" fill="none" stroke="#8a8a8a" stroke-width="0.6"/></svg>
<div class="abs" style="left:475.25px;top:33.5px;width:0.7px;height:41.8px;background:#d2d2d2;"></div>
<div class="abs" style="left:479.8px;top:35.2px;width:57.6px;height:29.6px;background:#fff;border:0.5px solid #e3e3e3;"></div>
<div class="abs" style="left:537.4px;top:35.2px;width:6.4px;height:29.6px;background:#fdfdfd;"></div>
<div class="abs" style="left:537.8px;top:35.2px;width:5.8px;height:9.6px;background:#d4d4d4;"></div>
<svg class="abs" style="left:539.4px;top:48.8px;" width="2.6" height="1.8" viewBox="0 0 2.6 1.8"><path d="M0 0h2.6L1.3 1.7z" fill="#777"/></svg>
<svg class="abs" style="left:539.4px;top:58.8px;" width="2.6" height="1.8" viewBox="0 0 2.6 1.8"><path d="M0 0h2.6L1.3 1.7z" fill="#777"/></svg>
<div class="abs" style="left:539.4px;top:57.8px;width:2.6px;height:0.5px;background:#777;"></div>
<svg class="abs" style="left:481.4px;top:37.1px;" width="7.2" height="6.4" viewBox="0 0 7.2 6.4"><rect x="0.4" y="0.4" width="6.4" height="5.6" fill="none" stroke="#7c7c7c" stroke-width="0.62"/><path d="M0.4 4.4l2-2 2 2 1-1 1.4 1.4" fill="none" stroke="#7c7c7c" stroke-width="0.62"/></svg>
<svg class="abs" style="left:491px;top:37.1px;" width="7.2" height="6.4" viewBox="0 0 7.2 6.4"><rect x="0.4" y="0.4" width="6.4" height="5.6" fill="none" stroke="#7c7c7c" stroke-width="0.62"/><path d="M1.4 2h2.6M1.4 3.4h4.4M1.4 4.6h4.4M5 0.4v2.4" fill="none" stroke="#7c7c7c" stroke-width="0.62"/></svg>
<svg class="abs" style="left:500.4px;top:37.1px;" width="7.2" height="6.4" viewBox="0 0 7.2 6.4"><path d="M0.6 0.4l6 5.6" fill="none" stroke="#7c7c7c" stroke-width="0.62"/></svg>
<svg class="abs" style="left:509.8px;top:37.1px;" width="7.2" height="6.4" viewBox="0 0 7.2 6.4"><path d="M0.4 0.4l5.8 5.4" fill="none" stroke="#7c7c7c" stroke-width="0.62"/><path d="M6.8 6.2L4.6 5.6l1.4-1.4z" fill="#7c7c7c"/></svg>
<svg class="abs" style="left:518.9px;top:37.1px;" width="7.2" height="6.4" viewBox="0 0 7.2 6.4"><rect x="0.4" y="0.6" width="6.4" height="5.2" fill="none" stroke="#7c7c7c" stroke-width="0.62"/></svg>
<svg class="abs" style="left:528.4px;top:37.1px;" width="7.2" height="6.4" viewBox="0 0 7.2 6.4"><ellipse cx="3.6" cy="3.2" rx="3.2" ry="2.6" fill="none" stroke="#7c7c7c" stroke-width="0.62"/></svg>
<svg class="abs" style="left:481.4px;top:46.8px;" width="7.2" height="6.4" viewBox="0 0 7.2 6.4"><rect x="0.4" y="0.6" width="6.4" height="5.2" fill="none" stroke="#7c7c7c" stroke-width="0.62"/></svg>
<svg class="abs" style="left:491px;top:46.8px;" width="7.2" height="6.4" viewBox="0 0 7.2 6.4"><path d="M3.6 0.4L6.8 6H0.4z" fill="none" stroke="#7c7c7c" stroke-width="0.62"/></svg>
<svg class="abs" style="left:500.4px;top:46.8px;" width="7.2" height="6.4" viewBox="0 0 7.2 6.4"><path d="M0.6 0.6h3v5h3" fill="none" stroke="#7c7c7c" stroke-width="0.62"/></svg>
<svg class="abs" style="left:509.8px;top:46.8px;" width="7.2" height="6.4" viewBox="0 0 7.2 6.4"><path d="M0.6 0.6h3v4.6h2" fill="none" stroke="#7c7c7c" stroke-width="0.62"/><path d="M6.8 5.2L5 4.2v2z" fill="#7c7c7c"/></svg>
<svg class="abs" style="left:518.9px;top:46.8px;" width="7.2" height="6.4" viewBox="0 0 7.2 6.4"><path d="M0.4 2.2h3.2V0.6L6.8 3.2 3.6 5.8V4.2H0.4z" fill="none" stroke="#7c7c7c" stroke-width="0.62"/></svg>
<svg class="abs" style="left:528.4px;top:46.8px;" width="7.2" height="6.4" viewBox="0 0 7.2 6.4"><path d="M2.4 0.4h2.4v3h1.6L3.6 6 0.8 3.4h1.6z" fill="none" stroke="#7c7c7c" stroke-width="0.62"/></svg>
<svg class="abs" style="left:481.4px;top:55.8px;" width="7.2" height="6.4" viewBox="0 0 7.2 6.4"><path d="M1 1h2.4l1-0.6 1.6 1.4V6H1.6L0.6 4z" fill="none" stroke="#7c7c7c" stroke-width="0.62"/></svg>
<svg class="abs" style="left:491px;top:55.8px;" width="7.2" height="6.4" viewBox="0 0 7.2 6.4"><path d="M1.4 0.6h3l-1 2.2h2L3 6l0.6-2.4H1.6z" fill="none" stroke="#7c7c7c" stroke-width="0.62"/></svg>
<svg class="abs" style="left:500.4px;top:55.8px;" width="7.2" height="6.4" viewBox="0 0 7.2 6.4"><path d="M0.4 0.6C4 0.6 6.4 3 6.6 6" fill="none" stroke="#7c7c7c" stroke-width="0.62"/></svg>
<svg class="abs" style="left:509.8px;top:55.8px;" width="7.2" height="6.4" viewBox="0 0 7.2 6.4"><path d="M0.2 6C2 3 2.2 0.6 3.4 0.6S5 3 6.8 6" fill="none" stroke="#7c7c7c" stroke-width="0.62"/></svg>
<svg class="abs" style="left:518.9px;top:55.8px;" width="7.2" height="6.4" viewBox="0 0 7.2 6.4"><path d="M4.4 0.4c-1 0-1 0.6-1 1.4s-0.2 1.2-0.8 1.4c0.6 0.2 0.8 0.6 0.8 1.4s0 1.4 1 1.4" fill="none" stroke="#7c7c7c" stroke-width="0.62"/></svg>
<svg class="abs" style="left:528.4px;top:55.8px;" width="7.2" height="6.4" viewBox="0 0 7.2 6.4"><path d="M2.8 0.4c1 0 1 0.6 1 1.4s0.2 1.2 0.8 1.4c-0.6 0.2-0.8 0.6-0.8 1.4s0 1.4-1 1.4" fill="none" stroke="#7c7c7c" stroke-width="0.62"/></svg>
<svg class="abs" style="left:548.6px;top:35px;" width="14.4" height="14.6" viewBox="0 0 14.4 14.6"><rect x="0.5" y="0.5" width="6.6" height="6.6" fill="#fff" stroke="#9aa7c4" stroke-width="0.7"/><rect x="3.6" y="3.6" width="7" height="7" fill="#efc75e"/><rect x="7" y="7" width="6.8" height="6.8" fill="#fff" stroke="#9aa7c4" stroke-width="0.7"/></svg>
<span class="t" style="top:52.82px;font-size:5.8px;left:556.4px;transform:translateX(-50%);color:#3c3c3c;">排列</span>
<svg class="abs" style="left:555.3px;top:61.3px;" width="2.6" height="1.8" viewBox="0 0 2.6 1.8"><path d="M0 0h2.6L1.3 1.7z" fill="#777"/></svg>
<span class="t" style="top:70.52px;font-size:5.8px;left:552.9px;transform:translateX(-50%);color:#555;">绘图</span>
<svg class="abs" style="left:572.2px;top:35.8px;" width="15" height="13.8" viewBox="0 0 15 13.8"><rect x="0.4" y="0.4" width="11" height="9.6" fill="#f7f7f7" stroke="#d4d4d4" stroke-width="0.6"/><path d="M13.6 2.8L6.6 10.4 4.4 12.6l0.8-3z" fill="#c9c9c9"/><path d="M3.4 13.2h4" stroke="#c9c9c9" stroke-width="0.8"/></svg>
<span class="t" style="top:52.62px;font-size:5.8px;left:579px;transform:translateX(-50%);color:#c2c2c2;">快速样式</span>
<svg class="abs" style="left:578px;top:61.3px;" width="2.6" height="1.8" viewBox="0 0 2.6 1.8"><path d="M0 0h2.6L1.3 1.7z" fill="#cfcfcf"/></svg>
<span class="t" style="top:36.52px;font-size:5.8px;left:602.8px;color:#c0c0c0;">形状填充</span>
<svg class="abs" style="left:628.5px;top:38.3px;" width="2.6" height="1.8" viewBox="0 0 2.6 1.8"><path d="M0 0h2.6L1.3 1.7z" fill="#cfcfcf"/></svg>
<span class="t" style="top:48.12px;font-size:5.8px;left:602.8px;color:#c0c0c0;">形状轮廓</span>
<svg class="abs" style="left:628.5px;top:49.9px;" width="2.6" height="1.8" viewBox="0 0 2.6 1.8"><path d="M0 0h2.6L1.3 1.7z" fill="#cfcfcf"/></svg>
<span class="t" style="top:59.12px;font-size:5.8px;left:602.8px;color:#c0c0c0;">形状效果</span>
<svg class="abs" style="left:628.5px;top:60.9px;" width="2.6" height="1.8" viewBox="0 0 2.6 1.8"><path d="M0 0h2.6L1.3 1.7z" fill="#cfcfcf"/></svg>
<svg class="abs" style="left:594.8px;top:35.8px;" width="6.4" height="6.4" viewBox="0 0 6.4 6.4"><path d="M1 3.4L3.4 1l2.2 2.2L3.2 5.6z" fill="none" stroke="#c2c2c2" stroke-width="0.7"/><path d="M5.6 3.8c0.6 1 0.6 1.6 0 1.6s-0.6-0.6 0-1.6z" fill="#c2c2c2"/></svg>
<svg class="abs" style="left:594.6px;top:47.4px;" width="6.4" height="6.4" viewBox="0 0 6.4 6.4"><rect x="0.4" y="1.4" width="4.6" height="4.2" fill="none" stroke="#c6c6c6" stroke-width="0.6"/><path d="M6 0.6L2.8 4l-0.8 0.4 0.4-0.8z" fill="#b6b6b6"/></svg>
<svg class="abs" style="left:594.6px;top:58.6px;" width="6.6" height="6" viewBox="0 0 6.6 6"><rect x="1.6" y="0.4" width="4.4" height="3.8" fill="#fafafa" stroke="#c6c6c6" stroke-width="0.6"/><path d="M0.4 2.6v2.8h4.4" fill="none" stroke="#bcbcbc" stroke-width="0.9"/></svg>
<svg class="abs" style="left:632.7px;top:71.3px;" width="3.8" height="3.8" viewBox="0 0 3.8 3.8"><path d="M0.3 0.3h2.4M0.3 0.3v2.4M1.4 1.4l2 2M3.4 1.8v1.6H1.8" fill="none" stroke="#8a8a8a" stroke-width="0.6"/></svg>
<div class="abs" style="left:638.45px;top:33.5px;width:0.7px;height:41.8px;background:#d2d2d2;"></div>
<svg class="abs" style="left:644.4px;top:35.2px;" width="7.4" height="7.4" viewBox="0 0 7.4 7.4"><circle cx="4.4" cy="2.9" r="2.4" fill="none" stroke="#3b7bc8" stroke-width="0.85"/><path d="M2.7 4.7L0.5 7" stroke="#3b7bc8" stroke-width="1"/></svg>
<span class="t" style="top:36.52px;font-size:5.8px;left:653.8px;color:#3c3c3c;">查找</span>
<svg class="abs" style="left:644.6px;top:46.6px;" width="7" height="7.4" viewBox="0 0 7 7.4"><path d="M0.4 2.6c0.8-2.6 3.6-2.6 4.4 0" fill="none" stroke="#3b7bc8" stroke-width="0.7"/><path d="M5.6 1.6L4.8 3.2 3.6 2z" fill="#3b7bc8"/><text x="0" y="7" font-size="3.6" font-family="Liberation Sans, sans-serif" fill="#555">ac</text></svg>
<span class="t" style="top:48.12px;font-size:5.8px;left:653.8px;color:#3c3c3c;">替换</span>
<svg class="abs" style="left:670.7px;top:49.9px;" width="2.6" height="1.8" viewBox="0 0 2.6 1.8"><path d="M0 0h2.6L1.3 1.7z" fill="#777"/></svg>
<svg class="abs" style="left:646px;top:57.8px;" width="5" height="7" viewBox="0 0 5 7"><path d="M0.6 0.4v5.4l1.4-1.2 1 2.2 0.8-0.4-1-2.2h1.8z" fill="#fff" stroke="#777" stroke-width="0.55"/></svg>
<span class="t" style="top:59.12px;font-size:5.8px;left:653.8px;color:#3c3c3c;">选择</span>
<svg class="abs" style="left:667.7px;top:60.9px;" width="2.6" height="1.8" viewBox="0 0 2.6 1.8"><path d="M0 0h2.6L1.3 1.7z" fill="#777"/></svg>
<span class="t" style="top:70.52px;font-size:5.8px;left:659.6px;transform:translateX(-50%);color:#3c3c3c;">编辑</span>
<div class="abs" style="left:680.05px;top:33.5px;width:0.7px;height:41.8px;background:#d2d2d2;"></div>
<svg class="abs" style="left:691.2px;top:39px;" width="6" height="6" viewBox="0 0 6 6"><circle cx="3" cy="3" r="2.35" fill="#f59a23"/></svg>
<span class="t" style="top:52.62px;font-size:5.8px;left:694.2px;transform:translateX(-50%);color:#3c3c3c;">加</span>
<span class="t" style="top:59.52px;font-size:5.8px;left:694.6px;transform:translateX(-50%);color:#3c3c3c;">载项</span>
<span class="t" style="top:70.52px;font-size:5.8px;left:694.5px;transform:translateX(-50%);color:#555;">加载项</span>
<div class="abs" style="left:708.25px;top:33.5px;width:0.7px;height:41.8px;background:#d2d2d2;"></div>
<svg class="abs" style="left:737.8px;top:72.4px;" width="6.4" height="3.6" viewBox="0 0 6.4 3.6"><path d="M0.5 3.2L3.2 0.6l2.7 2.6" fill="none" stroke="#666" stroke-width="0.75"/></svg>
</div>
<div id="thumbs"></div>
<div class="ov" id="thumbs-c">
<div class="abs" style="left:80.6px;top:78px;width:7px;height:312.6px;background:#fff;border-left:0.6px solid #cfcfcf;border-right:0.6px solid #cfcfcf;"></div>
<div class="abs" style="left:80.6px;top:78.4px;width:7px;height:6.2px;background:#fff;border:0.6px solid #bdbdbd;"></div>
<svg class="abs" style="left:82.6px;top:80.6px;" width="3.2" height="2" viewBox="0 0 3.2 2"><path d="M0 2h3.2L1.6 0z" fill="#444"/></svg>
<div class="abs" style="left:80.6px;top:383.6px;width:7px;height:6.6px;background:#fff;border:0.6px solid #bdbdbd;"></div>
<svg class="abs" style="left:82.5px;top:386px;" width="3.2" height="2" viewBox="0 0 3.2 2"><path d="M0 0h3.2L1.6 2z" fill="#444"/></svg>
<div class="abs" style="left:89px;top:77px;width:0.7px;height:314.5px;background:#d0d0d0;"></div>
<span class="t" style="top:86.46px;font-size:8.4px;left:7.8px;transform:translateX(-50%);color:#6a6a6a;">1</span>
<svg class="abs" style="left:6.2px;top:95.9px;" width="3.4" height="3.4" viewBox="0 0 3.8 3.8"><path d="M1.9 0l0.5 1.3 1.4 0.1-1.1 0.9 0.4 1.4-1.2-0.8-1.2 0.8 0.4-1.4L0 1.4l1.4-0.1z" fill="#555"/></svg>
<span class="t" style="top:126.06px;font-size:8.4px;left:7.8px;transform:translateX(-50%);color:#6a6a6a;">2</span>
<svg class="abs" style="left:6.2px;top:135.5px;" width="3.4" height="3.4" viewBox="0 0 3.8 3.8"><path d="M1.9 0l0.5 1.3 1.4 0.1-1.1 0.9 0.4 1.4-1.2-0.8-1.2 0.8 0.4-1.4L0 1.4l1.4-0.1z" fill="#555"/></svg>
<span class="t" style="top:165.66px;font-size:8.4px;left:7.8px;transform:translateX(-50%);color:#6a6a6a;">3</span>
<svg class="abs" style="left:6.2px;top:175.1px;" width="3.4" height="3.4" viewBox="0 0 3.8 3.8"><path d="M1.9 0l0.5 1.3 1.4 0.1-1.1 0.9 0.4 1.4-1.2-0.8-1.2 0.8 0.4-1.4L0 1.4l1.4-0.1z" fill="#555"/></svg>
<span class="t" style="top:205.16px;font-size:8.4px;left:7.8px;transform:translateX(-50%);color:#e0685c;">4</span>
<svg class="abs" style="left:6.2px;top:214.6px;" width="3.4" height="3.4" viewBox="0 0 3.8 3.8"><path d="M1.9 0l0.5 1.3 1.4 0.1-1.1 0.9 0.4 1.4-1.2-0.8-1.2 0.8 0.4-1.4L0 1.4l1.4-0.1z" fill="#555"/></svg>
<span class="t" style="top:243.16px;font-size:8.4px;left:7.8px;transform:translateX(-50%);color:#6a6a6a;">5</span>
<svg class="abs" style="left:6.2px;top:252.6px;" width="3.4" height="3.4" viewBox="0 0 3.8 3.8"><path d="M1.9 0l0.5 1.3 1.4 0.1-1.1 0.9 0.4 1.4-1.2-0.8-1.2 0.8 0.4-1.4L0 1.4l1.4-0.1z" fill="#555"/></svg>
<span class="t" style="top:282.86px;font-size:8.4px;left:7.8px;transform:translateX(-50%);color:#6a6a6a;">6</span>
<svg class="abs" style="left:6.2px;top:292.3px;" width="3.4" height="3.4" viewBox="0 0 3.8 3.8"><path d="M1.9 0l0.5 1.3 1.4 0.1-1.1 0.9 0.4 1.4-1.2-0.8-1.2 0.8 0.4-1.4L0 1.4l1.4-0.1z" fill="#555"/></svg>
<span class="t" style="top:322.36px;font-size:8.4px;left:7.8px;transform:translateX(-50%);color:#6a6a6a;">7</span>
<svg class="abs" style="left:6.2px;top:331.8px;" width="3.4" height="3.4" viewBox="0 0 3.8 3.8"><path d="M1.9 0l0.5 1.3 1.4 0.1-1.1 0.9 0.4 1.4-1.2-0.8-1.2 0.8 0.4-1.4L0 1.4l1.4-0.1z" fill="#555"/></svg>
<svg class="abs" style="left:18px;top:87.3px;" width="51.6" height="28.8" viewBox="0 0 51.6 28.8"><defs><linearGradient id="t1" x1="0" y1="0" x2="1" y2="0"><stop offset="0" stop-color="#0a0c10"/><stop offset="0.35" stop-color="#1d2533"/><stop offset="0.7" stop-color="#3b5680"/><stop offset="1" stop-color="#7d93b4"/></linearGradient><filter id="tb1"><feGaussianBlur stdDeviation="0.5"/></filter></defs><rect width="51.6" height="28.8" fill="url(#t1)"/><g filter="url(#tb1)"><path d="M33 28.8L51.6 2v26.8z" fill="#8fa2bd" opacity="0.55"/><path d="M40 28.8L51.6 12v16.8z" fill="#c7d0dc" opacity="0.5"/><path d="M0 0h7l-3 28.8H0z" fill="#050608" opacity="0.7"/><path d="M10 0h4l-4 28.8H7z" fill="#2a3546" opacity="0.6"/></g><text x="23.6" y="7.6" font-size="3" font-weight="700" fill="#cfd8e6" font-family="Liberation Sans, Noto Sans CJK SC, sans-serif">实践汇报</text><g fill="#b9c4d6" font-size="1.7" font-family="Liberation Sans, Noto Sans CJK SC, sans-serif"><text x="17.6" y="13">· 姓名：杨麒龙</text><text x="17.6" y="17">· 班级：计科专升本</text><text x="17.6" y="21">· 学号：2022年实习汇报</text></g></svg>
<svg class="abs" style="left:18px;top:126.9px;" width="51.6" height="28.8" viewBox="0 0 51.6 28.8"><defs><linearGradient id="t2" x1="0" y1="0" x2="1" y2="1"><stop offset="0" stop-color="#3f78c9"/><stop offset="0.5" stop-color="#5f94db"/><stop offset="1" stop-color="#2f5fa8"/></linearGradient><filter id="tb2"><feGaussianBlur stdDeviation="0.45"/></filter></defs><rect width="51.6" height="28.8" fill="#fff"/><path d="M0 0h29.6L23.6 28.8H0z" fill="url(#t2)"/><g filter="url(#tb2)"><path d="M8 28.8L27 5l-4 23.8z" fill="#a9b4c3"/><path d="M12 28.8L25 12l-2 16.8z" fill="#6f7d92"/><path d="M0 20l10 4 1 4.8H0z" fill="#e8eef5"/><ellipse cx="5" cy="9" rx="3.5" ry="1.6" fill="#9cc0ee" opacity="0.8"/></g><g font-family="Liberation Sans, Noto Sans CJK SC, sans-serif"><text x="36" y="6.6" font-size="2.6" font-weight="700" fill="#2b3f73">目  录</text><text x="32" y="3.6" font-size="1.5" fill="#555">C O N T E N T S</text><rect x="30.6" y="9" width="19" height="3.2" fill="#e9ecf5"/><rect x="30.6" y="13" width="19" height="3.2" fill="#e9ecf5"/><rect x="30.6" y="17" width="19" height="3.2" fill="#e9ecf5"/><rect x="30.6" y="21" width="19" height="3.2" fill="#e9ecf5"/><g font-size="2" fill="#3a5aa8"><text x="31.2" y="11.5">公司简介与岗位</text><text x="31.2" y="15.5">工作任务</text><text x="31.2" y="19.5">工作收获</text><text x="31.2" y="23.5">问题与建议</text></g></g></svg>
<svg class="abs" style="left:18px;top:166.5px;" width="51.6" height="28.8" viewBox="0 0 51.6 28.8"><defs><linearGradient id="t3" x1="0" y1="0" x2="1" y2="0"><stop offset="0" stop-color="#0c1424"/><stop offset="0.45" stop-color="#2a5696"/><stop offset="1" stop-color="#3f72c2"/></linearGradient></defs><rect width="51.6" height="28.8" fill="#fff"/><path d="M0 1.6h20l6 5.6-4.4 4.8 4.4 4.8-6 5.8H0z" fill="url(#t3)"/><text x="2.6" y="9.6" font-size="2" font-weight="700" fill="#eef2f8" font-family="Liberation Sans, Noto Sans CJK SC, sans-serif">公司简介与岗位</text><rect x="27.6" y="6.6" width="18.6" height="12" fill="#e4e6ee" stroke="#9a9fb5" stroke-width="0.4"/><rect x="27.8" y="6.8" width="3.4" height="2" fill="#9bbf4a"/><rect x="27.8" y="16" width="3.4" height="2" fill="#9bbf4a"/><rect x="28.6" y="10" width="14" height="2.4" fill="#2c3560"/><rect x="28.6" y="13" width="16" height="1" fill="#6b7194"/><rect x="33" y="16.4" width="11" height="1" fill="#6b7194"/></svg>
<div class="abs" style="left:16.3px;top:204px;width:54.7px;height:31.6px;background:#fff;border:1.1px solid #a8323a;"></div>
<svg class="abs" style="left:17.6px;top:205.4px" width="52" height="29" viewBox="0 0 52 29"><defs><filter id="tb4"><feGaussianBlur stdDeviation="0.3"/></filter></defs><text x="2" y="3.4" font-size="2.1" font-weight="900" fill="#3a5aa8" font-family="Liberation Sans, Noto Sans CJK SC, sans-serif">工作任务与工作照</text><g filter="url(#tb4)"><rect x="3.2" y="6.6" width="11.6" height="13" fill="#c5ccd3"/><rect x="3.2" y="16" width="11.6" height="3.6" fill="#b79a7b"/><path d="M9 19.6v-7l2-2.6 3.8 1v8.6z" fill="#1d2028"/><rect x="4.4" y="13" width="4" height="3.4" fill="#4a4f57"/></g><rect x="21.2" y="3.4" width="21" height="22.2" fill="#e6e7ee"/><rect x="21.2" y="3.4" width="21" height="1.2" fill="#5a6070"/><g font-size="1.6" fill="#333" font-family="Liberation Serif, Noto Serif CJK SC, serif"><text x="27.4" y="7.4">本周主要是查找公</text><text x="25.8" y="9.5">页所需的相关素材</text><text x="25.8" y="11.6">文字、视频等。然</text><text x="25.8" y="13.7">择合适的前端技术</text><text x="25.8" y="15.8">和CSS进行部分网页</text><text x="25.8" y="17.9">式设计，最后是学</text></g></svg>
<svg class="abs" style="left:18px;top:244px;" width="51.6" height="28.8" viewBox="0 0 51.6 28.8"><defs><linearGradient id="t5" x1="0" y1="0" x2="1" y2="1"><stop offset="0" stop-color="#3a73c6"/><stop offset="0.5" stop-color="#6ba0e2"/><stop offset="1" stop-color="#2d5ea8"/></linearGradient><filter id="tb5"><feGaussianBlur stdDeviation="0.45"/></filter></defs><rect width="51.6" height="28.8" fill="#fff"/><path d="M0 0h23.4L19.2 28.8H0z" fill="url(#t5)"/><g filter="url(#tb5)"><path d="M10 28.8L22 3l-3 25.8z" fill="#a7b3c5"/><path d="M13 28.8L21 11l-2 17.8z" fill="#65748b"/><path d="M0 18l11 5-1 5.8H0z" fill="#dfe7f1"/><ellipse cx="4" cy="13" rx="2.6" ry="2" fill="#e9f1fb" opacity="0.9"/></g><text x="25" y="3.8" font-size="2" font-weight="700" fill="#2f4a8c" font-family="Liberation Sans, Noto Sans CJK SC, sans-serif">工作收获</text><rect x="24.6" y="7" width="24.6" height="18.6" fill="#4a76c9"/><rect x="48.4" y="8" width="1.6" height="16" fill="#9db7e6"/><g fill="#dfe9fa" opacity="0.9"><rect x="27" y="10" width="14" height="1.4"/><rect x="28" y="12" width="2" height="6"/><rect x="31" y="12" width="2" height="7"/><rect x="34" y="11" width="2.4" height="7"/><rect x="37.4" y="12" width="2" height="5"/></g></svg>
<svg class="abs" style="left:18px;top:283.7px;" width="51.6" height="28.8" viewBox="0 0 51.6 28.8"><rect width="51.6" height="28.8" fill="#fff"/><text x="2" y="5.2" font-size="3" font-weight="700" fill="#2f4a9c" font-family="Liberation Sans, sans-serif">&gt;&gt;&gt;</text><text x="17" y="5" font-size="2" font-weight="700" fill="#2f4a8c" font-family="Liberation Sans, Noto Sans CJK SC, sans-serif">问题与建议</text><rect x="10.4" y="8" width="37.6" height="17" fill="#efefef"/><g fill="#3b3b3b"><rect x="11.6" y="12.6" width="35.6" height="1.3"/><rect x="11.6" y="14.9" width="34" height="1.3" fill="#555"/><rect x="11.6" y="17.2" width="35.6" height="1.3"/><rect x="11.6" y="19.5" width="30" height="1.3"/><rect x="44" y="19.5" width="3" height="1.3" fill="#666"/></g><g fill="#c9c9c9"><rect x="11.6" y="9.6" width="34" height="0.9"/><rect x="11.6" y="22.4" width="34" height="0.9"/></g></svg>
<svg class="abs" style="left:18px;top:323.2px;" width="51.6" height="28.8" viewBox="0 0 51.6 28.8"><defs><linearGradient id="t7" x1="0" y1="0" x2="1" y2="1"><stop offset="0" stop-color="#6f84ab"/><stop offset="0.5" stop-color="#9aa9c4"/><stop offset="1" stop-color="#bfc6d4"/></linearGradient><filter id="tb7"><feGaussianBlur stdDeviation="0.6"/></filter></defs><rect width="51.6" height="28.8" fill="url(#t7)"/><g filter="url(#tb7)"><path d="M0 20l22-6 29.6 6v8.8H0z" fill="#d4d9e3" opacity="0.7"/><path d="M0 0h51.6v5H0z" fill="#63799f" opacity="0.6"/></g><rect x="10" y="5.6" width="32" height="7.4" fill="#27386a"/><text x="26" y="11.6" font-size="5.6" font-weight="900" fill="#fff" text-anchor="middle" font-family="Liberation Sans, Noto Sans CJK SC, sans-serif">感谢观看!</text><rect x="15" y="15.6" width="21.6" height="3.2" fill="#4b74c7"/><text x="25.8" y="18.1" font-size="2" fill="#e8effb" text-anchor="middle" font-family="Liberation Sans, Noto Sans CJK SC, sans-serif">汇报人：杨麒龙</text></svg>
</div>
<div id="edit"></div>
<div class="ov" id="edit-c">
<div class="abs" style="left:740.2px;top:77px;width:7.7px;height:314.5px;background:#f0f0f0;"></div>
<div class="abs" style="left:740.4px;top:78.2px;width:7.2px;height:285.2px;background:#f5f5f5;border-left:0.6px solid #e2e2e2;"></div>
<div class="abs" style="left:740.4px;top:78.4px;width:7.2px;height:6.4px;background:#fff;border:0.6px solid #bdbdbd;"></div>
<svg class="abs" style="left:742.4px;top:80.6px;" width="3.2" height="2" viewBox="0 0 3.2 2"><path d="M0 2h3.2L1.6 0z" fill="#444"/></svg>
<div class="abs" style="left:740.6px;top:204.6px;width:6.8px;height:38px;background:#fff;border:0.6px solid #b5b5b5;"></div>
<div class="abs" style="left:740.4px;top:356.8px;width:7.2px;height:6.6px;background:#fff;border:0.6px solid #bdbdbd;"></div>
<svg class="abs" style="left:742.4px;top:359.2px;" width="3.2" height="2" viewBox="0 0 3.2 2"><path d="M0 0h3.2L1.6 2z" fill="#444"/></svg>
<svg class="abs" style="left:741.8px;top:365.6px;" width="4.4" height="6" viewBox="0 0 4.4 6"><path d="M0 2.6h4.4L2.2 0zM0 5.6h4.4L2.2 3z" fill="#555"/></svg>
<svg class="abs" style="left:741.8px;top:372.8px;" width="4.4" height="6" viewBox="0 0 4.4 6"><path d="M0 0.2h4.4L2.2 2.8zM0 3.2h4.4L2.2 5.8z" fill="#555"/></svg>
<div class="abs" style="left:91.4px;top:381.6px;width:647.4px;height:7.4px;background:#fff;border:0.6px solid #c4c4c4;"></div>
<div class="abs" style="left:91.4px;top:381.6px;width:7.6px;height:7.4px;background:#fff;border:0.6px solid #b5b5b5;"></div>
<svg class="abs" style="left:94.2px;top:383.7px;" width="2" height="3.2" viewBox="0 0 2 3.2"><path d="M2 0v3.2L0 1.6z" fill="#444"/></svg>
<div class="abs" style="left:731.4px;top:381.6px;width:7.4px;height:7.4px;background:#fff;border:0.6px solid #b5b5b5;"></div>
<svg class="abs" style="left:734.2px;top:383.7px;" width="2" height="3.2" viewBox="0 0 2 3.2"><path d="M0 0v3.2L2 1.6z" fill="#444"/></svg>
<div class="abs" style="left:156.2px;top:82.6px;width:519.1px;height:292.4px;background:#fff;"></div>
<svg class="abs" style="left:156.2px;top:85px" width="170" height="34" viewBox="0 0 170 34"><defs><filter id="ts"><feGaussianBlur stdDeviation="1.1"/></filter><linearGradient id="tsg" x1="0" y1="0" x2="1" y2="0"><stop offset="0" stop-color="#8d93a3" stop-opacity="0"/><stop offset="0.12" stop-color="#8d93a3" stop-opacity="0.8"/><stop offset="0.9" stop-color="#8d93a3" stop-opacity="0.4"/><stop offset="1" stop-color="#8d93a3" stop-opacity="0"/></linearGradient></defs><rect x="1" y="20" width="148" height="3.2" fill="url(#tsg)" filter="url(#ts)"/><text x="7.6" y="21.5" font-size="17.1" font-weight="900" fill="#425eab" font-family="Liberation Sans, Noto Sans CJK SC, sans-serif">工作任务与工作照</text></svg>
<svg class="abs" style="left:189px;top:146.4px" width="107" height="137" viewBox="0 0 107 137"><defs>
<linearGradient id="wall" x1="0" y1="0" x2="1" y2="1"><stop offset="0" stop-color="#c1c9d1"/><stop offset="0.5" stop-color="#cdd3d9"/><stop offset="1" stop-color="#d8dcdf"/></linearGradient>
<linearGradient id="desk" x1="0" y1="0" x2="0" y2="1"><stop offset="0" stop-color="#c3ab90"/><stop offset="1" stop-color="#dccbb4"/></linearGradient>
<filter id="pb"><feGaussianBlur stdDeviation="0.7"/></filter><filter id="pb2"><feGaussianBlur stdDeviation="1.8"/></filter></defs>
<rect width="107" height="137" fill="url(#wall)"/>
<g filter="url(#pb2)"><rect x="36" y="58" width="44" height="30" fill="#c9c9c4"/><rect x="40" y="66" width="30" height="12" fill="#b9b4aa"/><rect x="44" y="80" width="24" height="8" fill="#c8b696"/></g>
<g filter="url(#pb)">
<path d="M3 0l17 12-1.2 1.6L0 2.4V0z" fill="#e8ecef"/>
<rect x="0" y="53" width="40" height="30" fill="#e7eaeb"/><rect x="0" y="61" width="38" height="1.2" fill="#c4c8ca"/><rect x="19" y="54" width="1.2" height="28" fill="#cfd3d5"/>
<rect x="14" y="50.6" width="3" height="3" fill="#4b4b4b"/><rect x="24" y="50.6" width="7" height="3" fill="#e2b7b2"/>
<rect x="0" y="80" width="14" height="16" fill="#dfe2e3"/>
<rect x="68" y="72" width="8" height="22" fill="#eceeee"/>
<path d="M0 100l34-6 73 10v33H0z" fill="url(#desk)"/>
<path d="M9.4 69.6h22.2l9.6 25.2-22.6 2.2z" fill="#3d4249"/><path d="M11.6 71.6h18.6l8.4 21.6-18.4 1.8z" fill="#555b63"/>
<path d="M18.6 97l22.6-2.2 12.4 3-23 4.4z" fill="#6a6e74"/>
<rect x="2" y="93" width="16" height="5" fill="#2b2e32"/>
<path d="M0 100.6l25-2.2 1.6 6L0 107.6z" fill="#e6e4df"/><path d="M0 107.6l26.6-3.2v2.6L0 110.4z" fill="#9b968d"/>
<path d="M48 93l24-4.6 8 7-24 5.6z" fill="#ecece9"/>
<path d="M62 49.4l1.7-8.7 5.9-5.5 10.9-1.4 8.1 4.2 3.4 6.8-2 7-7-3-5.2-2.8-7.4 1.2z" fill="#121418"/>
<path d="M62.9 45l-1.3 12.6 1.6 3.4 0.2 5.4 3 5 6 1.4 9-4 6.6-6.6-3.6-6.4-2.2-8.2-7.8-3.6z" fill="#c7a18b"/><path d="M66 68l5 3 8-3-3 5-7 0.6z" fill="#a98a78"/>
<path d="M62.4 52.2l8-1.6 10 1" stroke="#2a2624" stroke-width="0.9" fill="none"/>
<path d="M107 53.6l-9 0.6-8 5.8-6 8-6 8.6-6 10-6 7.4-6 4.6-3 1.4v17l13 4 15 5.2 22 4.6z" fill="#171a22"/>
<path d="M57 100l-12-3-12 3-7 8 2 7 12 2.2 17-0.8z" fill="#ddbaa4"/>
<path d="M57 99l8-7 4 1.6-5 7z" fill="#c9a089"/>
</g>
</svg>
<div class="abs" style="left:366.2px;top:115px;width:212.6px;height:228.8px;background:#e7e7ed;"></div>
<div class="abs" style="left:365.6px;top:114.6px;width:213.4px;height:11.3px;background:#2d3f73;border-radius:1.2px;"></div>
<span class="t" style="top:146.53px;font-size:9.2px;left:426.9px;color:#141414;font-weight:600;font-family:&quot;Liberation Serif&quot;,&quot;Noto Serif CJK SC&quot;,serif;letter-spacing:0.66px;">本周主要是查找公司宣传网</span>
<span class="t" style="top:163.91px;font-size:9.2px;left:409.8px;color:#141414;font-weight:600;font-family:&quot;Liberation Serif&quot;,&quot;Noto Serif CJK SC&quot;,serif;letter-spacing:0.66px;">页所需的相关素材，包括图片、</span>
<span class="t" style="top:181.29px;font-size:9.2px;left:409.8px;color:#141414;font-weight:600;font-family:&quot;Liberation Serif&quot;,&quot;Noto Serif CJK SC&quot;,serif;letter-spacing:0.66px;">文字、视频等。然后研究并选</span>
<span class="t" style="top:198.67px;font-size:9.2px;left:409.8px;color:#141414;font-weight:600;font-family:&quot;Liberation Serif&quot;,&quot;Noto Serif CJK SC&quot;,serif;letter-spacing:0.66px;">择合适的前端技术，使用<span class="la">HTML</span></span>
<span class="t" style="top:216.05px;font-size:9.2px;left:409.8px;color:#141414;font-weight:600;font-family:&quot;Liberation Serif&quot;,&quot;Noto Serif CJK SC&quot;,serif;letter-spacing:0.66px;">和<span class="la">CSS</span>进行部分网页的布局和样</span>
<span class="t" style="top:233.43px;font-size:9.2px;left:409.8px;color:#141414;font-weight:600;font-family:&quot;Liberation Serif&quot;,&quot;Noto Serif CJK SC&quot;,serif;letter-spacing:0.66px;">式设计，最后是学习并协助同</span>
<span class="t" style="top:250.81px;font-size:9.2px;left:409.8px;color:#141414;font-weight:600;font-family:&quot;Liberation Serif&quot;,&quot;Noto Serif CJK SC&quot;,serif;letter-spacing:0.66px;">时进行一些响应式的内容。</span>
</div>
<div id="status"></div>
<div class="ov" id="status-c">
<span class="t" style="top:394.62px;font-size:5.8px;left:6.6px;color:#444;">幻灯片 第 4 张，共 7 张</span>
<svg class="abs" style="left:76.6px;top:393.6px;" width="7" height="6.4" viewBox="0 0 7 6.4"><rect x="0.4" y="0.4" width="5.4" height="4" fill="none" stroke="#777" stroke-width="0.6"/><path d="M1.4 1.6h3.4M1.4 2.8h3.4M2 6h3M3.4 4.4V6" stroke="#777" stroke-width="0.5"/><path d="M4.6 3.2l1 1 1.4-2" fill="none" stroke="#555" stroke-width="0.6"/></svg>
<span class="t" style="top:394.62px;font-size:5.8px;left:92.6px;color:#444;">简体中文(中国大陆)</span>
<svg class="abs" style="left:150.6px;top:393.8px;" width="7" height="6.4" viewBox="0 0 7 6.4"><circle cx="2.6" cy="2.6" r="2" fill="none" stroke="#666" stroke-width="0.6"/><path d="M2.6 1.2v2.6M1.4 2h2.4M4.4 4.2l2 2M6.4 4.2l-2 2" stroke="#555" stroke-width="0.6"/></svg>
<span class="t" style="top:394.62px;font-size:5.8px;left:159px;color:#222;font-weight:700;">辅助功能: 调查</span>
<svg class="abs" style="left:513.4px;top:394px;" width="6" height="6" viewBox="0 0 6 6"><path d="M0.4 5.4h5M1.4 4.4L3 0.8l1.6 3.6M1.4 4.4h3.2" fill="none" stroke="#666" stroke-width="0.6"/></svg>
<span class="t" style="top:394.62px;font-size:5.8px;left:521.6px;color:#444;">备注</span>
<svg class="abs" style="left:542.6px;top:393.8px;" width="7.4" height="6.4" viewBox="0 0 7.4 6.4"><path d="M0.3 0.3h6.8v4.2H3.2L1.6 6V4.5H0.3z" fill="#4a4a4a"/></svg>
<span class="t" style="top:394.62px;font-size:5.8px;left:550.8px;color:#444;">批注</span>
<div class="abs" style="left:572px;top:391.8px;width:19.6px;height:9.8px;background:#c9c9c9;"></div>
<svg class="abs" style="left:578.4px;top:393.8px;" width="7" height="6" viewBox="0 0 7 6"><rect x="0.4" y="0.4" width="6" height="5" fill="none" stroke="#666" stroke-width="0.6"/><path d="M2.2 0.4v5M2.2 2h4" stroke="#666" stroke-width="0.5"/></svg>
<svg class="abs" style="left:597.4px;top:394px;" width="6.6" height="6" viewBox="0 0 6.6 6"><rect x="0.3" y="0.3" width="2.4" height="2" fill="none" stroke="#777" stroke-width="0.5"/><rect x="3.7" y="0.3" width="2.4" height="2" fill="none" stroke="#777" stroke-width="0.5"/><rect x="0.3" y="3.4" width="2.4" height="2" fill="none" stroke="#777" stroke-width="0.5"/><rect x="3.7" y="3.4" width="2.4" height="2" fill="none" stroke="#777" stroke-width="0.5"/></svg>
<svg class="abs" style="left:616.8px;top:394px;" width="6.6" height="6" viewBox="0 0 6.6 6"><path d="M0.3 0.6h2.6v4.8H0.3zM3.7 0.6h2.6v4.8H3.7z" fill="none" stroke="#777" stroke-width="0.5"/><path d="M3.3 0v6" stroke="#555" stroke-width="0.6"/></svg>
<svg class="abs" style="left:636.4px;top:394px;" width="6.8" height="6.2" viewBox="0 0 6.8 6.2"><path d="M0.2 0.5h6.4M0.8 0.5v3.2h5.2V0.5M3.4 3.7v1.6M2 5.6h2.8" fill="none" stroke="#666" stroke-width="0.6"/></svg>
<span class="t" style="top:394.18px;font-size:6.4px;left:654.4px;transform:translateX(-50%);color:#777;">-</span>
<div class="abs" style="left:658.8px;top:396.8px;width:48.6px;height:0.6px;background:#9f9f9f;"></div>
<div class="abs" style="left:678.3px;top:393.8px;width:2.3px;height:6.4px;background:#3a3a3a;border-radius:0.5px;"></div>
<div class="abs" style="left:683px;top:395.8px;width:0.5px;height:2.6px;background:#777;"></div>
<span class="t" style="top:394.18px;font-size:6.4px;left:712px;transform:translateX(-50%);color:#777;">+</span>
<span class="t" style="top:394.33px;font-size:6.5px;left:719.6px;color:#444;">84%</span>
<svg class="abs" style="left:739px;top:394px;" width="5.6" height="5.6" viewBox="0 0 5.6 5.6"><rect x="0.3" y="0.3" width="5" height="5" fill="none" stroke="#777" stroke-width="0.5"/><path d="M1.6 2.8h2.4M2.8 1.6v2.4" stroke="#777" stroke-width="0.5"/></svg>
</div>
</div></div>
<!-- BOTTOM LEFT -->
<div id="bl">
<div class="abs" style="left:2.8px;top:520.3px;width:46.2px;height:15.8px;background:#1a1c1d;border-radius:2px;display:flex;align-items:center;padding-left:5.2px;font-size:7.8px;color:#dcdcdc;white-space:nowrap"><svg width="9" height="6.6" viewBox="0 0 10 7"><rect x="0" y="0" width="9" height="6.6" rx="1" fill="#19b955"/><path d="M5 1.6v3.6M3.4 3L5 1.5 6.6 3" stroke="#0d5e2d" stroke-width="0.9" fill="none"/></svg><span style="margin-left:4.3px">杨麒龙</span></div>
<div class="abs" style="left:53px;top:520.3px;width:65px;height:15.8px;background:#151718;border-radius:2px;font-size:8.6px;color:#d2d2d2">
<span class="t" style="left:5.5px;top:2.6px;font-size:10px">−</span><span class="t" style="left:18.8px;top:3.9px;font-size:7.9px">100%</span><span class="t" style="left:42.6px;top:4.6px;font-size:6.6px;color:#9a9a9a">v</span><span class="t" style="left:53.4px;top:2px;font-size:11px">+</span></div>
</div>
</body>
</html>
